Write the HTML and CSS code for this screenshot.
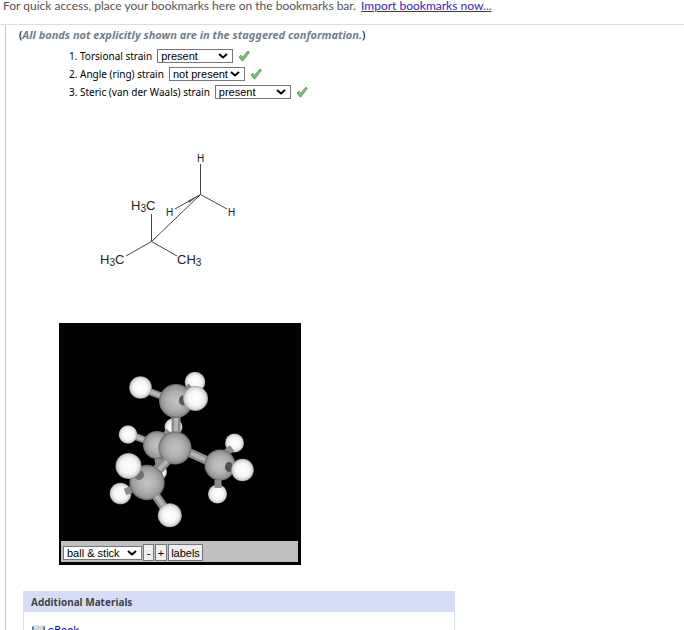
FILE: index.html
```html
<!DOCTYPE html>
<html lang="en">
<head>
	<meta charset="utf-8">
	<title>Strain in conformations</title>
	<link rel="stylesheet" href="styles.css">
</head>
<body>
	<div class="bookmarks">
		<span>For quick access, place your bookmarks here on the bookmarks bar.</span>
		<a href="#">Import bookmarks now...</a>
	</div>
	<svg width="0" height="0" class="defs">
		<symbol id="check" viewBox="0 0 12 12">
			<path d="M1 7 L3 5.2 L4.6 7.2 L9.8 1.2 L11.4 2.2 L5 10.8 L4 10.8 Z" fill="#66b866" stroke="#4b9a50" stroke-width=".8" stroke-linejoin="round"/>
			<path d="M2.6 6.6 L4.6 8.6 L9.8 2.6" fill="none" stroke="#8ad085" stroke-width="1"/>
		</symbol>
	</svg>
	<main class="content">
		<p class="note">(<em>All bonds not explicitly shown are in the staggered conformation.</em>)</p>
		<ol class="strains">
			<li>
				<label for="torsional">1. Torsional strain</label>
				<select id="torsional"><option>present</option><option>not present</option></select>
				<svg class="check" role="img" aria-label="correct"><use href="#check"/></svg>
			</li>
			<li>
				<label for="angle">2. Angle (ring) strain</label>
				<select id="angle"><option>not present</option><option>present</option></select>
				<svg class="check" role="img" aria-label="correct"><use href="#check"/></svg>
			</li>
			<li>
				<label for="steric">3. Steric (van der Waals) strain</label>
				<select id="steric"><option>present</option><option>not present</option></select>
				<svg class="check" role="img" aria-label="correct"><use href="#check"/></svg>
			</li>
		</ol>
		<!-- sawhorse drawing -->
		<svg class="sawhorse" width="160" height="130" viewBox="90 145 160 130">
			<g class="bonds">
				<path d="M200.500 164V194.500L151.500 241.500V214"/>
				<path d="M175 209L200.500 194.500L227 209"/>
				<path d="M126 256L151.500 241.500L177 256"/>
			</g>
			<path d="M200.500 194L188 201L189 203Z" fill="#555"/>
			<g class="small-atom">
				<text x="197" y="162">H</text>
				<text x="166" y="216">H</text>
				<text x="228" y="216">H</text>
			</g>
			<g class="group">
				<text x="131" y="210">H<tspan class="sub" dy="2">3</tspan><tspan dy="-2">C</tspan></text>
				<text x="100" y="264">H<tspan class="sub" dy="2">3</tspan><tspan dy="-2">C</tspan></text>
				<text x="177" y="264">CH<tspan class="sub" dy="2">3</tspan></text>
			</g>
		</svg>
		<div class="viewer">
			<svg class="model" viewBox="61 325 238 216">
				<defs>
					<radialGradient id="carbon">
						<stop offset="0" stop-color="#c4c4c4"/>
						<stop offset=".5" stop-color="#b2b2b2"/>
						<stop offset=".85" stop-color="#989898"/>
						<stop offset="1" stop-color="#686868"/>
					</radialGradient>
					<radialGradient id="hydrogen">
						<stop offset="0" stop-color="#fff"/>
						<stop offset=".6" stop-color="#f6f6f6"/>
						<stop offset=".88" stop-color="#d4d4d4"/>
						<stop offset="1" stop-color="#909090"/>
					</radialGradient>
				</defs>
				<!-- back methyl -->
				<circle cx="159" cy="472" r="8" fill="url(#hydrogen)"/>
				<path class="stick" d="M157 452L159 466"/>
				<circle cx="173.500" cy="427" r="9" fill="url(#hydrogen)"/>
				<path class="stick" d="M162 440L169 431"/>
				<path class="stick" d="M134 436L150 442"/>
				<path class="shine" d="M134 436L150 442"/>
				<circle cx="157" cy="445" r="14" fill="url(#carbon)"/>
				<circle cx="128" cy="434.500" r="9.300" fill="url(#hydrogen)"/>
				<!-- top methyl -->
				<path class="stick wide" d="M176 416V436"/>
				<path class="shine" d="M176 418V434"/>
				<circle cx="195" cy="382" r="10.300" fill="url(#hydrogen)"/>
				<path class="stick" d="M187 390L191 386"/>
				<path class="stick" d="M148 391L164 397"/>
				<path class="shine" d="M148 391L164 397"/>
				<circle cx="176" cy="401" r="17" fill="url(#carbon)"/>
				<circle cx="140.500" cy="387.500" r="11.300" fill="url(#hydrogen)"/>
				<ellipse cx="183" cy="400.500" rx="4" ry="5" fill="#555"/>
				<circle cx="195.500" cy="398.500" r="12.500" fill="url(#hydrogen)"/>
				<!-- right methyl -->
				<path class="stick wide" d="M188 452L208 461"/>
				<path class="shine" d="M188 452L208 461"/>
				<circle cx="234.500" cy="443" r="9.500" fill="url(#hydrogen)"/>
				<path class="stick" d="M226 453L232 448"/>
				<circle cx="220" cy="465" r="15.500" fill="url(#carbon)"/>
				<circle cx="217.500" cy="494" r="9.600" fill="url(#hydrogen)"/>
				<path class="stick" d="M218 480V488"/>
				<ellipse cx="229" cy="467" rx="4" ry="5" fill="#505050"/>
				<circle cx="242.500" cy="470" r="11.300" fill="url(#hydrogen)"/>
				<!-- left methyl and centre -->
				<path class="stick wide" d="M168 458L157 471"/>
				<circle cx="175" cy="448" r="16.500" fill="url(#carbon)"/>
				<path class="stick wide" d="M167 461L156 473"/>
				<path class="shine" d="M167 461L156 473"/>
				<circle cx="120.500" cy="493.500" r="10.800" fill="url(#hydrogen)"/>
				<path class="stick" d="M125 492L133 489"/>
				<circle cx="147" cy="482.500" r="17.700" fill="url(#carbon)"/>
				<path class="stick wide" d="M156 496L166 510"/>
				<path class="shine" d="M156 496L165 508"/>
				<circle cx="169.800" cy="515.300" r="12" fill="url(#hydrogen)"/>
				<ellipse cx="139" cy="475" rx="5" ry="5" fill="#707070"/>
				<circle cx="128.500" cy="466" r="13" fill="url(#hydrogen)"/>
			</svg>
			<div class="toolbar">
				<select aria-label="Display style"><option>ball &amp; stick</option><option>wireframe</option></select>
				<button type="button">-</button>
				<button type="button" class="plus">+</button>
				<button type="button" class="labels">labels</button>
			</div>
		</div>
		<section class="materials">
			<h2>Additional Materials</h2>
			<div class="links">
				<svg class="book" viewBox="0 0 14 12">
					<path d="M.5 1.500H13.500V10.500H.5Z" fill="#4d87b8" stroke="#376a95"/>
					<path d="M2 .5H6L7 1.500L8 .5H12V9H8L7 10L6 9H2Z" fill="#e8edf2" stroke="#9bb0c2" stroke-width=".6"/>
					<path d="M7 1.500V10M3 3H6M8 3H11M3 5H6M8 5H11" stroke="#a5afb8" stroke-width=".7"/>
				</svg>
				<a href="#">eBook</a>
			</div>
		</section>
	</main>
</body>
</html>
```
FILE: styles.css
```css
body { margin: 0; background: #fff; color: #000; font-family: "DejaVu Sans", Verdana, sans-serif; font-size: 10px; overflow: hidden; }
.defs { position: absolute; }
.bookmarks { box-sizing: border-box; height: 25px; padding-left: 3px; border-bottom: 1px solid #ddd; display: flex; gap: 5px; font: 12px/11px Lato, sans-serif; color: #555; white-space: nowrap; }
.bookmarks a { color: #3a22cc; text-underline-offset: 1px; }
.content { margin-left: 5px; border-left: 1px solid #c4c4c4; padding: 4px 0 0 13px; }
.note { margin: 0; line-height: 12px; font-family: "Noto Sans", sans-serif; font-size: 11px; }
.note em { color: #708090; font-weight: bold; }
.strains { list-style: none; margin: 6px 0 0 50px; padding: 0; font-family: "Noto Sans", sans-serif; }
.strains li { display: flex; align-items: center; height: 18px; gap: 5px; }
select, button { box-sizing: border-box; margin: 0; border: 1px solid #767676; border-radius: 0; color: #000; font: 11px/12px "Liberation Sans", Arial, sans-serif; }
select { width: 76px; height: 14px; padding: 0 0 0 3px; appearance: none; background: #fff url("data:image/svg+xml,%3Csvg xmlns='http://www.w3.org/2000/svg' width='10' height='6'%3E%3Cpath d='M1 1l4 3.500 4-3.500' fill='none' stroke='%23000' stroke-width='2'/%3E%3C/svg%3E") no-repeat right 4px center; }
.check { width: 12px; height: 12px; }
.sawhorse { display: block; margin: 44px 0 0 71px; }
.bonds { fill: none; stroke: #444; stroke-width: 1; }
.small-atom { font: 10px "Liberation Sans", Arial, sans-serif; fill: #222; }
.group { font: 13px "Liberation Sans", Arial, sans-serif; fill: #222; }
.sub { font-size: 10px; }
.viewer { width: 238px; margin: 48px 0 0 40px; border: 2px solid #000; border-bottom-width: 3px; background: #000; }
.model { display: block; width: 238px; height: 216px; }
.stick { stroke: #8c8c8c; stroke-width: 7; fill: none; }
.stick.wide { stroke-width: 9; }
.shine { stroke: #b4b4b4; stroke-width: 4; fill: none; }
.toolbar { box-sizing: border-box; display: flex; align-items: center; gap: 1px; height: 21px; padding: 2px 0 0 2px; margin-right: 1px; background: #c0c0c0; }
.toolbar select { width: 79px; height: 14px; }
.toolbar button { width: 11px; height: 17px; padding: 0; background: #efefef; }
.toolbar .plus { width: 12px; }
.toolbar .labels { width: 35px; }
.materials { width: 432px; margin: 26px 0 0 4px; box-sizing: border-box; border: 1px solid #d6ddf7; }
.materials h2 { margin: 0; padding-left: 7px; background: #d6ddf7; color: #444; font: bold 10px/20px "Noto Sans", sans-serif; }
.links { display: flex; align-items: center; gap: 3px; padding: 13px 8px; line-height: 12px; }
.links a { color: #00c; text-decoration: none; }
.book { width: 13px; height: 12px; }
```
